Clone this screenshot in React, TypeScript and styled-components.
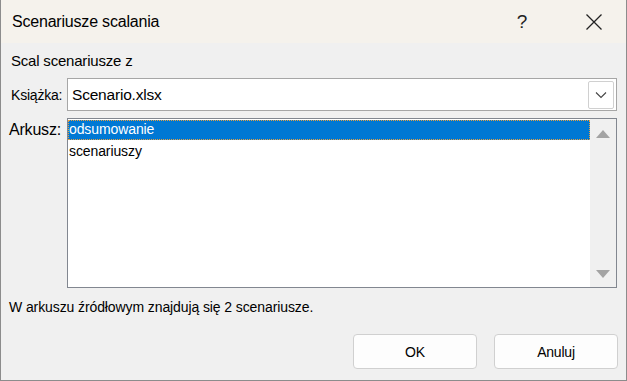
import styled, { createGlobalStyle } from "styled-components";

const GlobalStyle = createGlobalStyle`
    html, body {
        margin: 0;
        padding: 0;
        background: #f0f0f0;
    }
    * {
        box-sizing: border-box;
    }
`

const Window = styled.div`
    width: 627px;
    height: 381px;
    display: flex;
    flex-direction: column;
    border: 1px solid #8c8c8c;
    border-top: none;
    background: #f0f0f0;
    font-family: 'Liberation Sans', Arial, sans-serif;
    color: #000;
    overflow: hidden;
`

const TitleBar = styled.div`
    height: 43px;
    flex: none;
    display: flex;
    align-items: center;
    padding-left: 11px;
    padding-right: 8px;
    gap: 24px;
    background: #f5f2ec;
`

const Title = styled.div`
    flex: 1;
    font-size: 16px;
    letter-spacing: -0.2px;
`

const TitleButton = styled.div`
    width: 48px;
    height: 43px;
    display: flex;
    align-items: center;
    justify-content: center;
    font-size: 19px;
    font-weight: 300;
    color: #222;
`

const Body = styled.div`
    flex: 1;
    display: flex;
    flex-direction: column;
    padding: 8px 8px 11px 10px;
`

const GroupLabel = styled.div`
    font-size: 15px;
    letter-spacing: -0.2px;
    height: 27px;
    line-height: 20px;
`

const FieldGrid = styled.div`
    display: grid;
    grid-template-columns: 56px 550px;
    row-gap: 7px;
`

const Label = styled.div<{ $big?: boolean }>`
    font-size: ${p => (p.$big ? "16px" : "14px")};
    letter-spacing: -0.2px;
    padding-top: ${p => (p.$big ? "3px" : "9px")};
    margin-left: ${p => (p.$big ? "-2px" : "0")};
`

const Combo = styled.div`
    height: 33px;
    display: flex;
    align-items: center;
    background: #fff;
    border: 1px solid #a6a6a6;
    padding: 2px 2px 2px 4px;
`

const ComboText = styled.div`
    flex: 1;
    font-size: 15.5px;
    letter-spacing: -0.2px;
`

const DropButton = styled.div`
    width: 26px;
    height: 28px;
    display: flex;
    align-items: center;
    justify-content: center;
    border: 1px solid #d0d0d0;
    border-radius: 2px;
    background: #fff;
`

const ListBox = styled.div`
    height: 170px;
    display: flex;
    background: #fff;
    border: 1px solid #828790;
`

const Items = styled.div`
    flex: 1;
    padding-top: 1px;
`

const Item = styled.div<{ $selected?: boolean }>`
    height: 20px;
    line-height: 19px;
    font-size: 14px;
    padding-left: 1px;
    letter-spacing: -0.1px;
    background: ${p => (p.$selected ? "#0078d4" : "transparent")};
    color: ${p => (p.$selected ? "#fff" : "#000")};
    outline: ${p => (p.$selected ? "1px dotted #e8a040" : "none")};
    outline-offset: -1px;
    margin-bottom: 2px;
`

const ScrollBar = styled.div`
    width: 26px;
    background: #f0f0f0;
    display: flex;
    flex-direction: column;
    justify-content: space-between;
    align-items: center;
    padding: 10px 0 8px;
`

const Status = styled.div`
    font-size: 14px;
    letter-spacing: -0.1px;
    margin-top: 11px;
    margin-left: -2px;
`

const Buttons = styled.div`
    margin-top: auto;
    display: flex;
    justify-content: flex-end;
    gap: 17px;
`

const Button = styled.div`
    width: 124px;
    height: 35px;
    display: flex;
    align-items: center;
    justify-content: center;
    background: #fdfdfd;
    border: 1px solid #d0d0d0;
    border-radius: 4px;
    font-size: 14px;
    letter-spacing: -0.2px;
`

const Arrow = ({ down }: { down?: boolean }) => (
    <svg width="16" height="10" viewBox="0 0 16 10">
        <polygon points={down ? "1,1 15,1 8,9" : "1,9 15,9 8,1"} fill="#a3a3a3" />
    </svg>
)

export default function App() {
    return (
        <>
            <GlobalStyle />
            <Window>
                <TitleBar>
                    <Title>Scenariusze scalania</Title>
                    <TitleButton>?</TitleButton>
                    <TitleButton>
                        <svg width="18" height="18" viewBox="0 0 18 18">
                            <path d="M1.5 1.5 L16.5 16.5 M16.5 1.5 L1.5 16.5" stroke="#222" strokeWidth="1.3" />
                        </svg>
                    </TitleButton>
                </TitleBar>
                <Body>
                    <GroupLabel>Scal scenariusze z</GroupLabel>
                    <FieldGrid>
                        <Label>Książka:</Label>
                        <Combo>
                            <ComboText>Scenario.xlsx</ComboText>
                            <DropButton>
                                <svg width="12" height="8" viewBox="0 0 12 8">
                                    <path d="M1 1.5 L6 6.5 L11 1.5" stroke="#444" strokeWidth="1.1" fill="none" />
                                </svg>
                            </DropButton>
                        </Combo>
                        <Label $big>Arkusz:</Label>
                        <ListBox>
                            <Items>
                                <Item $selected>odsumowanie</Item>
                                <Item>scenariuszy</Item>
                            </Items>
                            <ScrollBar>
                                <Arrow />
                                <Arrow down />
                            </ScrollBar>
                        </ListBox>
                    </FieldGrid>
                    <Status>W arkuszu źródłowym znajdują się 2 scenariusze.</Status>
                    <Buttons>
                        <Button>OK</Button>
                        <Button>Anuluj</Button>
                    </Buttons>
                </Body>
            </Window>
        </>
    )
}
